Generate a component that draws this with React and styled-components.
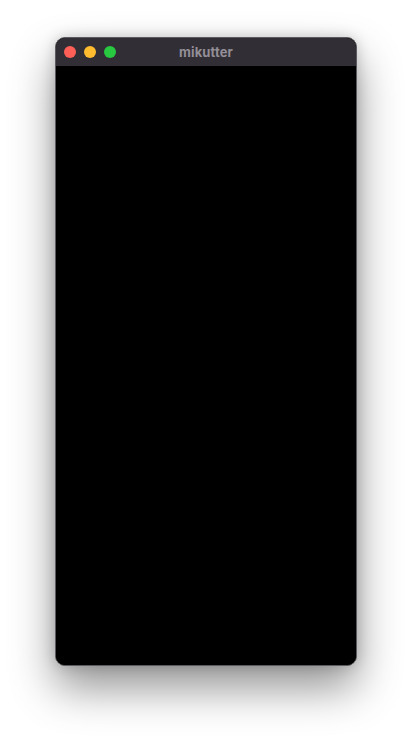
import styled, { createGlobalStyle } from "styled-components";

const GlobalStyle = createGlobalStyle`
  html, body {
    margin: 0;
    padding: 0;
    background: #ffffff;
  }
  body {
    font-family: Inter, "Noto Sans", sans-serif;
  }
`;

const Page = styled.div`
  width: 412px;
  height: 740px;
  display: flex;
  justify-content: center;
  padding-top: 37px;
  box-sizing: border-box;
  overflow: hidden;
`;

const Window = styled.div`
  width: 302px;
  height: 629px;
  box-sizing: border-box;
  border: 1px solid #5c5a5e;
  border-radius: 10px;
  background: #000000;
  overflow: hidden;
  display: flex;
  flex-direction: column;
  box-shadow: 0 22px 44px rgba(0, 0, 0, 0.42), 0 0 14px rgba(0, 0, 0, 0.18);
`;

const TitleBar = styled.div`
  height: 28px;
  flex-shrink: 0;
  background: #322e35;
  display: grid;
  grid-template-columns: 1fr auto 1fr;
  align-items: center;
  padding: 0 8px;
`;

const Lights = styled.div`
  display: flex;
  gap: 8px;
`;

const Light = styled.span`
  width: 12px;
  height: 12px;
  border-radius: 50%;
  background: ${(p) => p.color};
`;

const Title = styled.div`
  font-size: 13px;
  font-weight: 700;
  color: #938f97;
  letter-spacing: 0.1px;
`;

const Content = styled.div`
  flex: 1;
  background: #000000;
`;

export default function App() {
  return (
    <>
      <GlobalStyle />
      <Page>
        <Window>
          <TitleBar>
            <Lights>
              <Light color="#fe5f57" />
              <Light color="#febc2e" />
              <Light color="#28c840" />
            </Lights>
            <Title>mikutter</Title>
            <div />
          </TitleBar>
          <Content />
        </Window>
      </Page>
    </>
  );
}
